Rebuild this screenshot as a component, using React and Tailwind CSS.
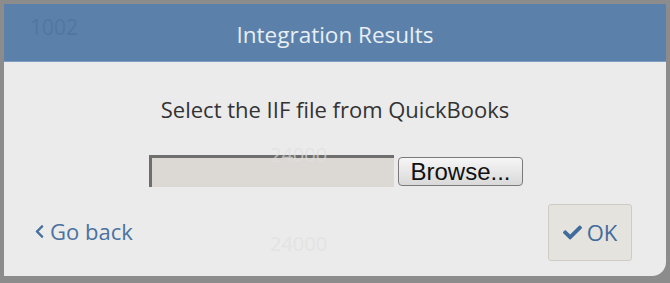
import { FaCheck, FaChevronLeft } from 'react-icons/fa'

const font = { fontFamily: '"Open Sans", "Liberation Sans", sans-serif' }

export default function App() {
  return (
    <div className="w-[670px] h-[283px] bg-[#8c8c8c] pt-[4px] px-[4px] pb-[7px]" style={font}>
      <div className="h-full flex flex-col bg-[#ebebeb] rounded-br-[14px] overflow-hidden">
        {/* Header */}
        <div className="relative h-[58px] shrink-0 bg-[#5b81aa] border-b border-[#7d9cc0] flex items-center justify-center">
          <span className="absolute left-[26px] top-[8px] text-[21px] text-[#52779f]">1002</span>
          <span className="text-[22.5px] text-[#e8eef5] pt-[5px]">Integration Results</span>
        </div>

        {/* Body */}
        <div className="relative flex-1 flex flex-col">
          <p className="mt-[31px] text-center text-[22px] text-[#333]">
            Select the IIF file from QuickBooks
          </p>

          <div className="mt-[29px] flex items-center justify-center gap-[4px] pl-[2px]">
            <div className="w-[245px] h-[32px] bg-[#dcd9d4] border-t-[3px] border-l-[3px] border-[#6e6e6e]" />
            <button className="w-[125px] h-[29px] rounded-[4px] border border-[#7a7a7a] bg-gradient-to-b from-[#f6f6f6] to-[#d9d9d9] text-[24px] text-[#111] leading-none pt-[2px]" style={{ fontFamily: '"Liberation Sans", Arial, sans-serif' }}>
              Browse...
            </button>
          </div>

          <span className="absolute left-[266px] top-[78px] text-[20px] text-[#e0e0e0]/70">24000</span>
          <span className="absolute left-[266px] top-[167px] text-[20px] text-[#e3e3e3]">24000</span>

          <div className="relative mt-auto mb-[15px] flex items-end justify-between pl-[28px] pr-[34px]">
            <a className="flex items-center gap-[3px] mb-[13px] text-[22px] text-[#4a72a0]">
              <FaChevronLeft className="w-[15px] h-[15px]" />
              <span>Go back</span>
            </a>
            <button className="w-[84px] h-[57px] rounded-[3px] border border-[#cfcbc4] bg-[#e5e3de] flex items-center justify-center gap-[5px] text-[22px] text-[#3f6c9c]">
              <FaCheck className="w-[19px] h-[19px]" />
              <span>OK</span>
            </button>
          </div>
        </div>
      </div>
    </div>
  )
}
